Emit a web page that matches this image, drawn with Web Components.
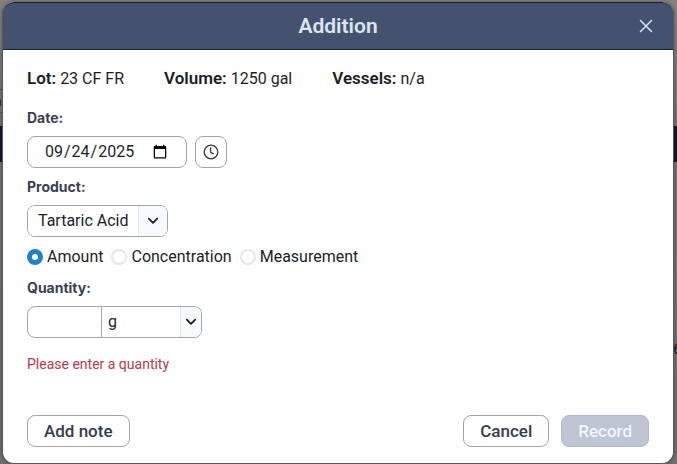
<!DOCTYPE html>
<html lang="en">
<head>
<meta charset="utf-8">
<title>Addition</title>
<style>
html, body { height: 100%; margin: 0; }
body { font: 16px/24px Roboto, "Liberation Sans", sans-serif; color: #1c1e26; overflow: hidden; }
</style>
</head>
<body>
<page-backdrop>
  <modal-dialog heading="Addition">
    <lot-summary>
      <lot-fact label="Lot:">23 CF FR</lot-fact>
      <lot-fact label="Volume:">1250 gal</lot-fact>
      <lot-fact label="Vessels:">n/a</lot-fact>
    </lot-summary>
    <date-field label="Date:" value="2025-09-24"></date-field>
    <product-field label="Product:"></product-field>
    <mode-choice></mode-choice>
    <quantity-field label="Quantity:" error="Please enter a quantity"></quantity-field>
    <action-button slot="note">Add note</action-button>
    <action-button slot="actions">Cancel</action-button>
    <action-button slot="actions" primary disabled>Record</action-button>
  </modal-dialog>
</page-backdrop>

<script>
const fieldCss = `
  * { box-sizing: border-box; }
  :host { display: block; }
  .label { display: block; width: max-content; padding-bottom: 7px; font: 700 14px/22px Inter, Roboto, sans-serif; color: #3b4050; }
  input, select, button { font: inherit; color: inherit; margin: 0; }
  .row { display: flex; gap: 8px; }
`;
const chevron = `<svg width="12" height="8" viewBox="0 0 12 8" fill="none" stroke="#1c1e26" stroke-width="1.8" stroke-linecap="round" stroke-linejoin="round"><path d="M1.8 1.7 6 5.9l4.2-4.2"/></svg>`;

function define(name, html) {
  customElements.define(name, class extends HTMLElement {
    connectedCallback() {
      if (this.shadowRoot) return;
      const attr = n => this.getAttribute(n) || "";
      this.attachShadow({ mode: "open" }).innerHTML = html(attr, this);
    }
  });
}

define("page-backdrop", () => `
  <style>
    * { box-sizing: border-box; }
    :host { display: block; position: relative; min-height: 100%; padding: 2px 3px 0 2px; overflow: hidden;
      box-sizing: border-box; background: linear-gradient(#85827e 0, #777574 120px, #707070 100%); }
    .band { position: absolute; left: 0; right: 0; top: 126px; height: 36px; background: #14182a; }
    .tab { position: absolute; left: -8px; top: 89px; width: 16px; height: 24px; border: 1px solid #55575c; }
    .stray { position: absolute; font-size: 14px; line-height: 20px; color: #15161a; }
    .left { left: -6px; top: 91px; }
    .right { right: -4px; top: 339px; }
    slot { display: block; position: relative; }
  </style>
  <div class="band"></div><div class="tab"></div>
  <span class="stray left" aria-hidden="true">a</span>
  <span class="stray right" aria-hidden="true">6</span>
  <slot></slot>`);

define("modal-dialog", attr => `
  <style>
    * { box-sizing: border-box; }
    :host { display: block; border-radius: 12px; background: #fff; border: 1px solid #55575f; border-top: 0; overflow: hidden; box-shadow: 0 0 4px #0005; }
    header { display: grid; grid-template-columns: 32px 1fr 32px; align-items: center; height: 48px; margin: 0 -1px;
      padding: 0 11px; background: #45526f; border: 1px solid #1a1f36; border-radius: 12px 12px 0 0; color: #dbe5f1; }
    h1 { grid-column: 2; margin: 0; font-size: 21px; line-height: 28px; font-weight: 600; text-align: center; }
    header button { width: 32px; height: 32px; padding: 0; border: 0; background: none; color: inherit; display: grid; place-items: center; }
    main { padding: 16px 24px 0; }
    footer { display: flex; gap: 12px; padding: 41px 24px 16px; }
    slot[name=note] { display: block; margin-right: auto; }
    slot[name=actions] { display: flex; gap: 12px; }
  </style>
  <header><h1>${attr("heading")}</h1>
    <button type="button" aria-label="Close"><svg width="14" height="14" viewBox="0 0 14 14" stroke="currentColor" stroke-width="1.5" stroke-linecap="round"><path d="M1.5 1.5l11 11M12.5 1.5l-11 11"/></svg></button>
  </header>
  <main><slot></slot></main>
  <footer><slot name="note"></slot><slot name="actions"></slot></footer>`);

define("lot-summary", () => `
  <style>:host { display: flex; flex-wrap: wrap; gap: 0 40px; margin-bottom: 16px; }</style><slot></slot>`);

define("lot-fact", attr => `
  <style>:host { display: block; } b { font-size: 17px; font-weight: 600; }</style><b>${attr("label")}</b> <slot></slot>`);

define("date-field", attr => `
  <style>${fieldCss}
    :host { margin-bottom: 8px; }
    input { width: 160px; height: 32px; padding: 0 16px; border: 1px solid #a2a5b0; border-radius: 8px; background: #fff; }
    button { width: 32px; height: 32px; padding: 0; border: 1px solid #a2a5b0; border-radius: 8px; background: #fff; display: grid; place-items: center; }
  </style>
  <label class="label" for="date">${attr("label")}</label>
  <div class="row"><input id="date" type="date" value="${attr("value")}">
    <button type="button" aria-label="Set to now"><svg width="16" height="16" viewBox="0 0 16 16" fill="none" stroke="#373b4a" stroke-width="1.3" stroke-linecap="round" stroke-linejoin="round"><circle cx="8" cy="8" r="6.8"/><path d="M7.6 4v4.4l2.8 1.5"/></svg></button>
  </div>`);

const selectCss = `
    .select { display: grid; height: 32px; border: 1px solid #a2a5b0; overflow: hidden; }
    select { grid-area: 1 / 1; appearance: none; border: 0; background: #fff; border-radius: 0; }
    .arrow { grid-area: 1 / 1; justify-self: end; pointer-events: none; display: grid; place-items: center; background: #f7fafc; border-left: 1px solid #e0e4ea; }
`;

define("product-field", attr => `
  <style>${fieldCss}${selectCss}
    :host { margin-bottom: 8px; }
    .select { border-radius: 8px; }
    select { padding: 0 38px 0 10px; }
    .arrow { width: 29px; }
  </style>
  <label class="label" for="product">${attr("label")}</label>
  <div class="row"><div class="select"><select id="product"><option>Tartaric Acid</option></select><span class="arrow">${chevron}</span></div></div>`);

define("mode-choice", () => `
  <style>
    :host { display: block; margin-bottom: 8px; }
    fieldset { display: flex; flex-wrap: wrap; gap: 0 8px; margin: 0; padding: 0; border: 0; }
    label { display: flex; align-items: center; gap: 4px; }
    input { appearance: none; box-sizing: border-box; width: 16px; height: 16px; margin: 0; border-radius: 50%; border: 2px solid #e2e8ee; background: #fff; }
    input:checked { border: 5px solid #2380c6; }
  </style>
  <fieldset aria-label="Entry mode">
    <label><input type="radio" name="mode" checked>Amount</label>
    <label><input type="radio" name="mode">Concentration</label>
    <label><input type="radio" name="mode">Measurement</label>
  </fieldset>`);

define("quantity-field", attr => `
  <style>${fieldCss}${selectCss}
    .row { gap: 0; }
    input { width: 75px; height: 32px; padding: 0 10px; border: 1px solid #a2a5b0; border-radius: 8px 0 0 8px; background: #fff; }
    .select { width: 100px; border-left: 0; border-radius: 0 8px 8px 0; }
    select { padding: 0 24px 0 6px; }
    .arrow { width: 21px; }
    p { margin: 16px 0 0; font-size: 14px; line-height: 20px; color: #b83a4b; }
  </style>
  <label class="label" for="quantity">${attr("label")}</label>
  <div class="row"><input id="quantity" type="text" inputmode="decimal" aria-describedby="error">
    <div class="select"><select aria-label="Unit"><option>g</option></select><span class="arrow">${chevron}</span></div></div>
  <p id="error" role="alert">${attr("error")}</p>`);

define("action-button", (attr, el) => `
  <style>
    :host { display: block; width: max-content; }
    button { display: block; box-sizing: border-box; height: 32px; padding: 0 16px; border: 1px solid #a2a5b0; border-radius: 8px;
      font: inherit; font-size: 17px; font-weight: 500; line-height: 24px; color: #373b4a; background: #fff; }
    .primary { background: #c0c5d4; color: #f3f6fb; border-color: #b4b8c5; }
  </style>
  <button type="button" class="${el.hasAttribute("primary") ? "primary" : ""}" ${el.hasAttribute("disabled") ? "disabled" : ""}><slot></slot></button>`);
</script>
</body>
</html>
